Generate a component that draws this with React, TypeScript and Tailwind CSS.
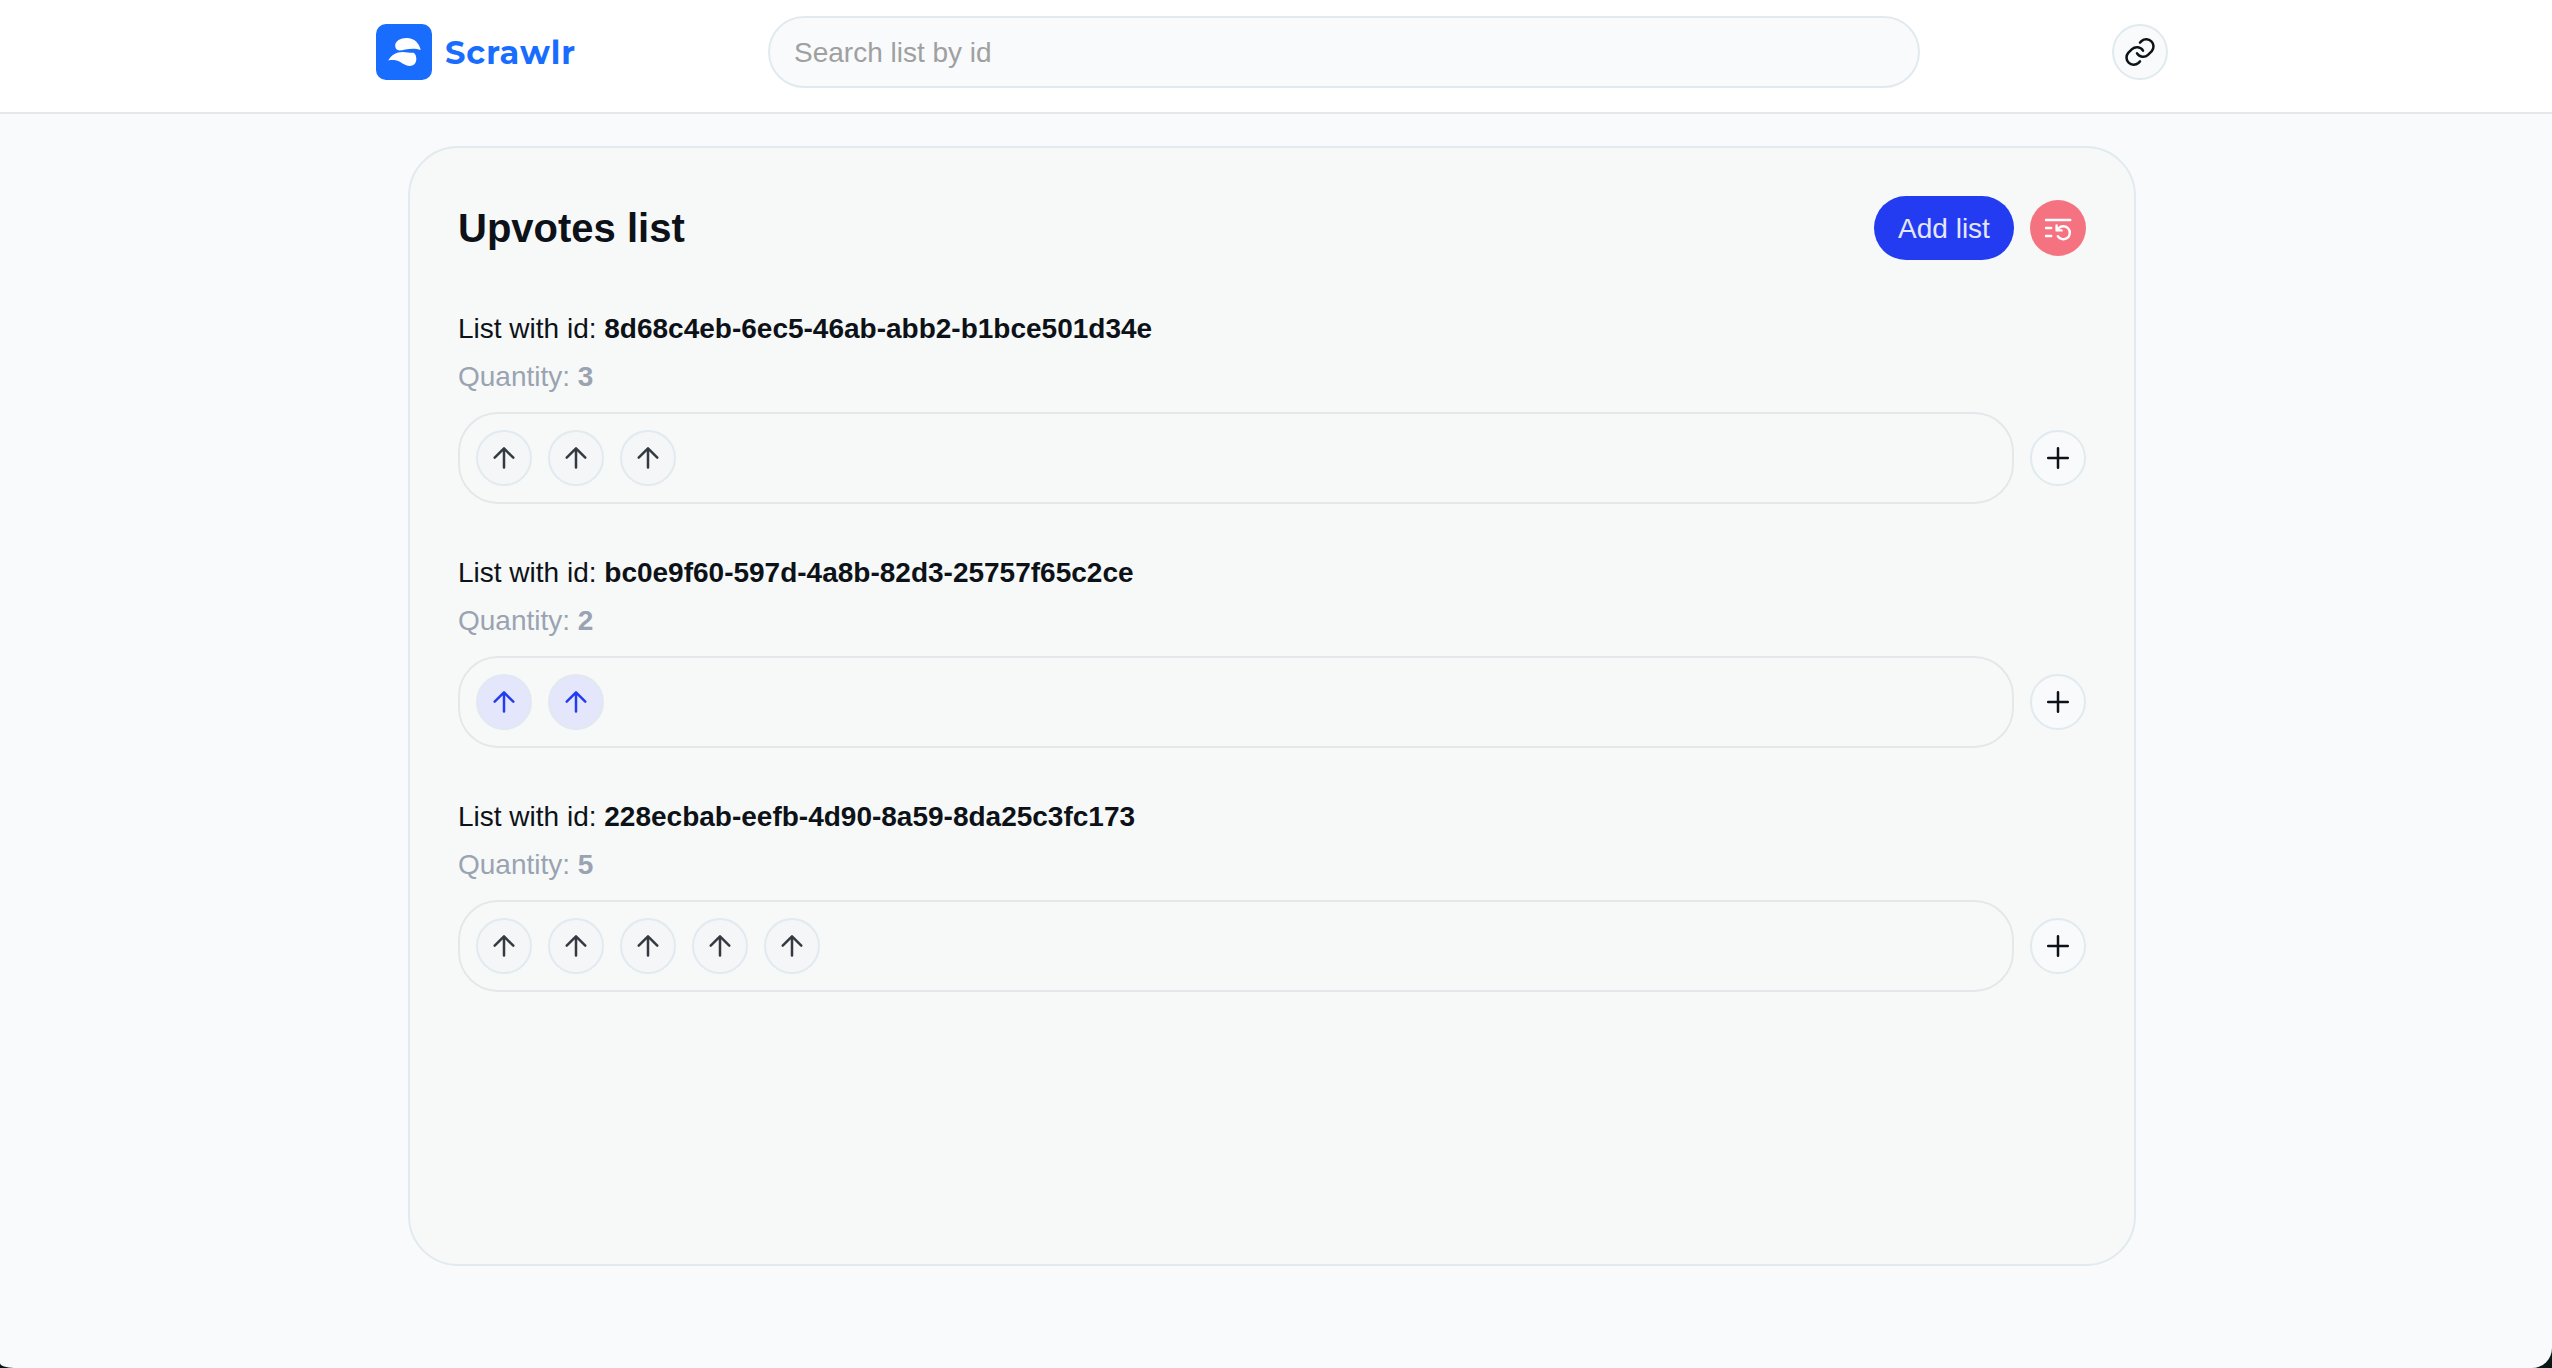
import React from "react";

const lists = [
  { id: "8d68c4eb-6ec5-46ab-abb2-b1bce501d34e", count: 3, selected: false },
  { id: "bc0e9f60-597d-4a8b-82d3-25757f65c2ce", count: 2, selected: true },
  { id: "228ecbab-eefb-4d90-8a59-8da25c3fc173", count: 5, selected: false },
];

function Glyph({ width = 2.5, children }: { width?: number; children: React.ReactNode }) {
  return (
    <svg
      viewBox="0 0 56 56"
      className="size-14 shrink-0"
      fill="none"
      stroke="currentColor"
      strokeWidth={width}
      strokeLinecap="round"
      strokeLinejoin="round"
    >
      {children}
    </svg>
  );
}

function Logo() {
  return (
    <div className="flex items-center gap-[13px]">
      <svg viewBox="0 0 56 56" className="size-14 rounded-[10px] bg-[#186dff]" fill="#fff">
        <path d="M44.700 26C40 24.300 34.500 24.400 29.500 25.600C25.500 26.500 23 26.900 21.200 25.800C19.800 24.900 19.200 23.200 19.200 21.300C19.200 17 24.500 13.900 30.500 13.900C38.500 13.900 43.500 19.500 44.700 26Z" />
        <path d="M12.300 36.400C14.800 31.200 20.500 27.900 26.800 27.900C30.500 27.900 33.500 28.900 37.500 28.700C39.500 29.700 40.400 32 40.300 35.200C40.200 39.400 37.500 41.900 33.500 41.900C29.500 41.900 27.500 40 24.300 38.100C20.800 36.100 17 35.700 12.300 36.400Z" />
      </svg>
      <span className="pt-px font-[Montserrat,Inter,sans-serif] text-[32px] leading-[56px] font-bold tracking-[0.9px] text-[#186dff]">
        Scrawlr
      </span>
    </div>
  );
}

function Header() {
  return (
    <header className="h-[114px] border-b-2 border-[#e5e7eb] bg-white pr-2">
      <div className="mx-auto flex h-26 w-[1792px] items-center">
        <div className="w-[392px]">
          <Logo />
        </div>
        <input
          placeholder="Search list by id"
          className="h-[72px] w-[1152px] rounded-full border-2 border-[#e1eaef] bg-[#f8fafc] px-6 pt-0.5 text-[28px] text-[#0d1218] outline-none placeholder:text-[#a0a0a0]"
        />
        <button className="ml-auto flex size-14 items-center justify-center rounded-full border-2 border-[#e1eaef] bg-[#f8fafc] text-[#0d1218]">
          <Glyph>
            <path d="M28 18.600L29.600 17A7.200 7.200 0 0 1 39.800 27.100L36 30.800A7.200 7.200 0 0 1 25 29.400" />
            <path d="M28 37.400L26.400 39A7.200 7.200 0 0 1 16.200 28.900L20 25.200A7.200 7.200 0 0 1 31 26.600" />
          </Glyph>
        </button>
      </div>
    </header>
  );
}

function UpvoteList({ id, count, selected }: { id: string; count: number; selected: boolean }) {
  return (
    <section className="text-[28px] leading-[48px]">
      <p className="h-12 pt-px">
        List with id: <b>{id}</b>
      </p>
      <p className="h-12 pt-px text-[#9aa3b2]">
        Quantity: <b>{count}</b>
      </p>
      <div className="mt-3 flex items-center gap-4">
        <div className="flex h-[92px] flex-1 gap-4 rounded-[40px] border-2 border-[#e5e7eb] p-4">
          {Array.from({ length: count }, (_, i) => (
            <button
              key={i}
              className={
                selected
                  ? "flex size-14 items-center justify-center rounded-full border-2 border-[#e1e9f0] bg-[#e4e6fb] text-[#233cf1]"
                  : "flex size-14 items-center justify-center rounded-full border-2 border-[#e1eaef] bg-[#f4f6f8] text-[#343a40]"
              }
            >
              <Glyph>
                <path d="M28 37.600V18.400M18.700 27.700L28 18.400L37.300 27.700" />
              </Glyph>
            </button>
          ))}
        </div>
        <button className="flex size-14 items-center justify-center rounded-full border-2 border-[#e1eaef] bg-[#f8fafc] text-[#0d1218]">
          <Glyph>
            <path d="M28 18.200V37.800M18.200 28H37.800" />
          </Glyph>
        </button>
      </div>
    </section>
  );
}

export default function App() {
  return (
    <div className="h-[1368px] overflow-hidden bg-[#061715] font-['Liberation_Sans',Arial,sans-serif] text-[#0d1218]">
      <div className="h-full overflow-hidden rounded-br-[20px] rounded-bl-[14px_5px] bg-[#f8fafc]">
        <Header />
        <div className="pt-8 pr-2">
          <main className="mx-auto flex h-[1120px] w-[1728px] flex-col gap-11 rounded-[50px] border-2 border-[#e1eaef] bg-[#f7f9f8] p-12">
            <div className="flex h-16 items-center gap-4">
              <h1 className="flex-1 text-[40px] leading-[64px] font-bold">Upvotes list</h1>
              <button className="h-16 w-[140px] rounded-full bg-[#233cf1] pt-px text-[28px] text-[#e4e6fb]">
                Add list
              </button>
              <button className="flex size-14 items-center justify-center rounded-full bg-[#f57380] text-white">
                <Glyph width={2.4}>
                  <path d="M16 20H40.200M16 28H21.200M16 36H21.200" />
                  <path d="M26.600 25.400V30.400H31.600M27 30L28.800 28.100A6.500 6.500 0 1 1 27.800 36.200" />
                </Glyph>
              </button>
            </div>
            {lists.map((l) => (
              <UpvoteList key={l.id} {...l} />
            ))}
          </main>
        </div>
      </div>
    </div>
  );
}
